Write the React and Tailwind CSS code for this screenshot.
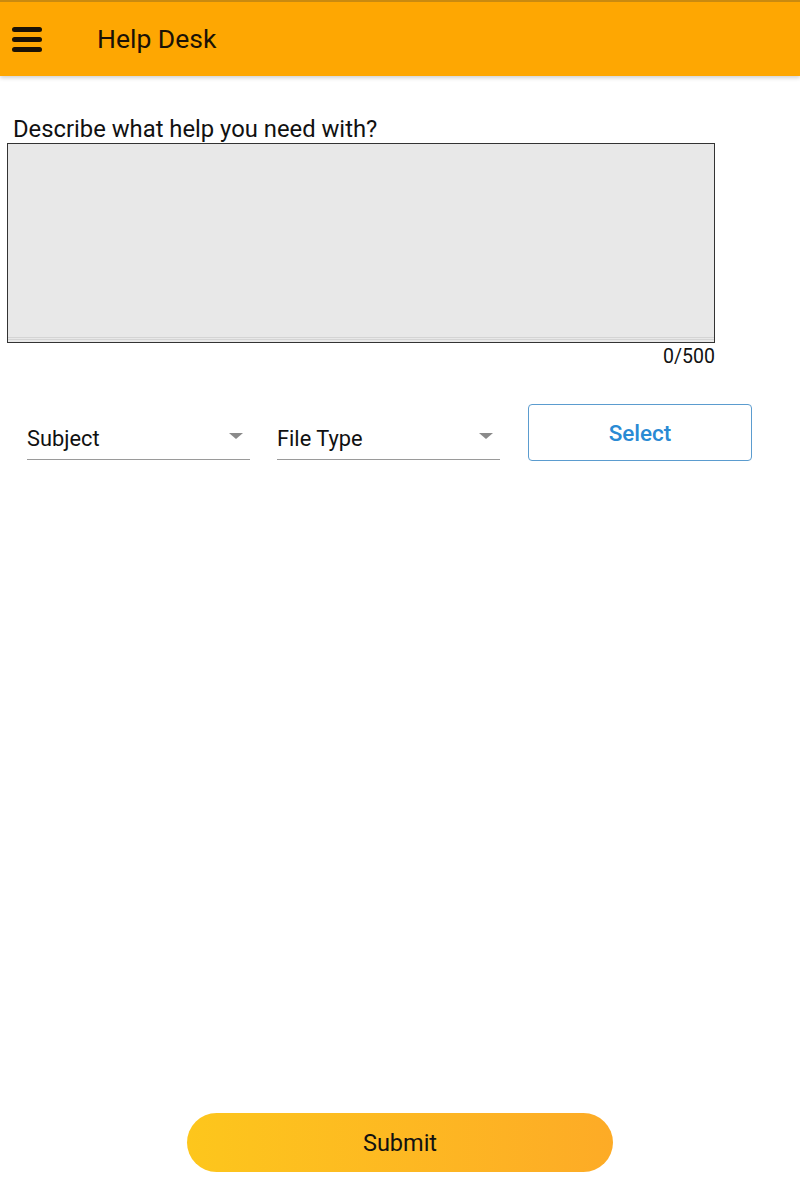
// Help Desk form screen
export default function App() {
  return (
    <div className="min-h-[1185px] w-[800px] bg-white flex flex-col" style={{ fontFamily: 'Roboto, "Liberation Sans", sans-serif' }}>
      {/* Top bar */}
      <header className="h-[76px] bg-[#fea702] border-t-2 border-[#c98a10] shadow-[0_2px_4px_rgba(0,0,0,0.18)] flex items-center px-3 z-10">
        <div className="flex flex-col gap-[5px] w-[30px]">
          <span className="h-[5px] rounded-sm bg-[#1a1206]" />
          <span className="h-[5px] rounded-sm bg-[#1a1206]" />
          <span className="h-[5px] rounded-sm bg-[#1a1206]" />
        </div>
        <h1 className="ml-[55px] text-[26.5px] text-[#1a1206] leading-none">Help Desk</h1>
      </header>

      {/* Description */}
      <div className="pl-[7px] pt-[39px] w-[715px]">
        <label className="block pl-[6px] text-[23.8px] leading-[28px] text-[#111]">Describe what help you need with?</label>
        <div className="h-[200px] bg-[#e8e8e8] border border-[#333] flex flex-col justify-end">
          <div className="h-[3px] mb-[2px] border-y border-[#d4d4d4]" />
        </div>
        <div className="text-right text-[19.5px] leading-[28px] text-[#111]">0/500</div>
      </div>

      {/* Selects */}
      <div className="flex items-start pl-[27px] pt-[33px]">
        <div className="w-[223px] border-b border-[#9a9a9a] mt-[15px] h-[41px] flex items-center justify-between pr-[7px]">
          <span className="text-[21.8px] text-[#111] pt-[1px]">Subject</span>
          <span className="w-0 h-0 border-x-[7px] border-x-transparent border-t-[6px] border-t-[#8a8a8a] mb-[6px]" />
        </div>
        <div className="ml-[27px] w-[223px] border-b border-[#9a9a9a] mt-[15px] h-[41px] flex items-center justify-between pr-[7px]">
          <span className="text-[21.8px] text-[#111] pt-[1px]">File Type</span>
          <span className="w-0 h-0 border-x-[7px] border-x-transparent border-t-[6px] border-t-[#8a8a8a] mb-[6px]" />
        </div>
        <button className="ml-[28px] w-[224px] h-[57px] border border-[#5b9ccf] rounded-[4px] text-[22.5px] font-medium text-[#2a8ad4] flex items-center justify-center pt-[3px]">
          Select
        </button>
      </div>

      <div className="flex-1" />

      {/* Submit */}
      <div className="flex justify-center pb-[13px]">
        <button className="w-[426px] h-[59px] rounded-full bg-gradient-to-r from-[#fdc61c] to-[#fdab26] text-[23.5px] text-[#111] pt-[3px]">
          Submit
        </button>
      </div>
    </div>
  )
}
